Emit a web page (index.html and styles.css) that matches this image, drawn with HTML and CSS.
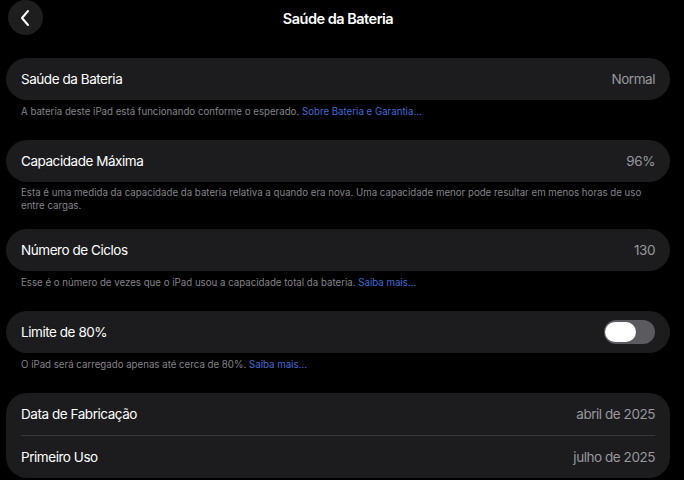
FILE: index.html
```html
<!DOCTYPE html>
<html lang="pt-BR">
<head>
<meta charset="utf-8">
<title>Saúde da Bateria</title>
<link rel="stylesheet" href="styles.css">
</head>
<body>
<div class="page">
  <header class="topbar">
    <button class="back" aria-label="Voltar">
      <svg width="12" height="18" viewBox="0 0 12 18"><path d="M9 2 L3 9 L9 16" fill="none" stroke="#fff" stroke-width="2" stroke-linecap="round" stroke-linejoin="round"/></svg>
    </button>
    <h1 class="title">Saúde da Bateria</h1>
  </header>

  <section class="group">
    <div class="card"><div class="row"><span class="label">Saúde da Bateria</span><span class="value">Normal</span></div></div>
    <p class="note">A bateria deste iPad está funcionando conforme o esperado. <a class="link">Sobre Bateria e Garantia...</a></p>
  </section>

  <section class="group">
    <div class="card"><div class="row"><span class="label">Capacidade Máxima</span><span class="value">96%</span></div></div>
    <p class="note note-tight">Esta é uma medida da capacidade da bateria relativa a quando era nova. Uma capacidade menor pode resultar em menos horas de uso entre cargas.</p>
  </section>

  <section class="group">
    <div class="card"><div class="row"><span class="label">Número de Ciclos</span><span class="value">130</span></div></div>
    <p class="note">Esse é o número de vezes que o iPad usou a capacidade total da bateria. <a class="link">Saiba mais...</a></p>
  </section>

  <section class="group">
    <div class="card"><div class="row"><span class="label">Limite de 80%</span><span class="toggle"><span class="knob"></span></span></div></div>
    <p class="note">O iPad será carregado apenas até cerca de 80%. <a class="link">Saiba mais...</a></p>
  </section>

  <section class="group">
    <div class="card">
      <div class="row"><span class="label">Data de Fabricação</span><span class="value">abril de 2025</span></div>
      <div class="divider"></div>
      <div class="row"><span class="label">Primeiro Uso</span><span class="value">julho de 2025</span></div>
    </div>
  </section>
</div>
</body>
</html>
```

FILE: styles.css
```css
html, body {
  margin: 0;
  padding: 0;
  background: #000;
}
body {
  font-family: Inter, "Noto Sans", "Liberation Sans", sans-serif;
  color: #fff;
  -webkit-font-smoothing: antialiased;
}
.page {
  width: 684px;
  height: 480px;
  overflow: hidden;
  padding: 0 14px 0 6px;
  box-sizing: border-box;
}
.topbar {
  position: relative;
  height: 36px;
  display: flex;
  align-items: center;
  justify-content: center;
  margin-bottom: 22px;
}
.back {
  position: absolute;
  left: 2px;
  top: 0;
  width: 35px;
  height: 35px;
  border-radius: 50%;
  border: none;
  background: #1e1e1f;
  display: flex;
  align-items: center;
  justify-content: center;
  padding: 0 2px 0 0;
}
.title {
  margin: 0;
  font-size: 14.5px;
  font-weight: 600;
  letter-spacing: -0.5px;
}
.group {
  margin-bottom: 21px;
}
.card {
  background: #1c1c1e;
  border-radius: 21px;
  padding: 0 15px;
}
.row {
  height: 42px;
  display: flex;
  align-items: center;
  justify-content: space-between;
}
.label {
  font-size: 13.5px;
  color: #fff;
  letter-spacing: -0.45px;
}
.value {
  font-size: 13.5px;
  color: #98989d;
  letter-spacing: -0.45px;
}
.divider {
  height: 1px;
  background: #3a3a3c;
}
.note {
  margin: 5px 0 0;
  padding: 0 15px;
  font-size: 9.7px;
  line-height: 14px;
  color: #838388;
}
.note-tight {
  line-height: 13px;
  margin-top: 4px;
  margin-bottom: -4px;
}
.link {
  color: #4169d4;
}
.toggle {
  width: 51px;
  height: 24px;
  border-radius: 12px;
  background: #5b5b5f;
  display: flex;
  align-items: center;
  padding: 0 2px;
  box-sizing: border-box;
}
.knob {
  width: 31px;
  height: 20px;
  border-radius: 10px;
  background: #fff;
  margin-left: -1px;
}
```
